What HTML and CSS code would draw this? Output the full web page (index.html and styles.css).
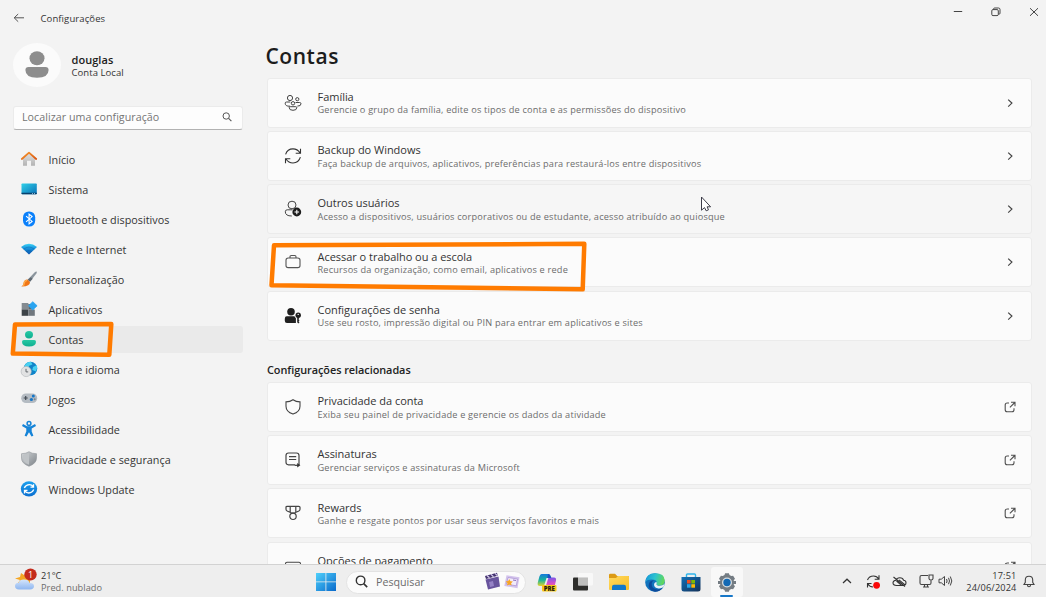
FILE: index.html
```html
<!DOCTYPE html>
<html lang="pt-BR">
<head>
<meta charset="utf-8">
<title>Configurações</title>
<link rel="stylesheet" href="styles.css">
</head>
<body>
<svg class="defs" width="0" height="0" aria-hidden="true">
  <defs>
    <linearGradient id="gTeal" x1="0" y1="0" x2="0" y2="1"><stop offset="0" stop-color="#27c9a4"/><stop offset="1" stop-color="#0fae90"/></linearGradient>
    <linearGradient id="gSys" x1="0" y1="0" x2="1" y2="1"><stop offset="0" stop-color="#2fd0e8"/><stop offset="1" stop-color="#0a71b8"/></linearGradient>
    <linearGradient id="gHouse" x1="0" y1="0" x2="0" y2="1"><stop offset="0" stop-color="#e4e4e4"/><stop offset="1" stop-color="#b3b3b3"/></linearGradient>
    <linearGradient id="gRoof" x1="0" y1="0" x2="1" y2="1"><stop offset="0" stop-color="#f79a30"/><stop offset="1" stop-color="#d9540f"/></linearGradient>
    <linearGradient id="gWifi" x1="0" y1="0" x2="0" y2="1"><stop offset="0" stop-color="#3ad0f5"/><stop offset=".45" stop-color="#1591dc"/><stop offset="1" stop-color="#0a4fa8"/></linearGradient>
    <linearGradient id="gBlue" x1="0" y1="0" x2="0" y2="1"><stop offset="0" stop-color="#1ba0ee"/><stop offset="1" stop-color="#0b6fd0"/></linearGradient>
    <linearGradient id="gShield" x1="0" y1="0" x2="1" y2="1"><stop offset="0" stop-color="#d3d6d9"/><stop offset="1" stop-color="#7d8388"/></linearGradient>
    <linearGradient id="gWin" x1="0" y1="0" x2="1" y2="1"><stop offset="0" stop-color="#4fd0fb"/><stop offset="1" stop-color="#0869cb"/></linearGradient>
    <linearGradient id="gCloud" x1="0" y1="0" x2="0" y2="1"><stop offset="0" stop-color="#d5e5fb"/><stop offset="1" stop-color="#8eb6f0"/></linearGradient>
    <linearGradient id="gFolder" x1="0" y1="0" x2="1" y2="1"><stop offset="0" stop-color="#ffd95e"/><stop offset="1" stop-color="#f9bd25"/></linearGradient>
    <linearGradient id="gEdge" x1="0" y1=".2" x2="1" y2=".4"><stop offset="0" stop-color="#1795d8"/><stop offset=".5" stop-color="#2bc3d0"/><stop offset="1" stop-color="#62d85a"/></linearGradient>
    <linearGradient id="gStore" x1="0" y1="0" x2="1" y2="1"><stop offset="0" stop-color="#1271b8"/><stop offset="1" stop-color="#153158"/></linearGradient>
    <linearGradient id="gCopA" x1="0" y1="0" x2="0" y2="1"><stop offset="0" stop-color="#1478dd"/><stop offset=".5" stop-color="#18b39a"/><stop offset="1" stop-color="#e0d52c"/></linearGradient>
    <linearGradient id="gCopB" x1="0" y1="0" x2="0" y2="1"><stop offset="0" stop-color="#7a57e8"/><stop offset=".5" stop-color="#d94fc4"/><stop offset="1" stop-color="#fb7c58"/></linearGradient>
    <symbol id="chevron" viewBox="0 0 12 12"><path d="M4.2 2.6 7.9 6.1 4.2 9.6" fill="none" stroke="#444" stroke-width="1.2"/></symbol>
    <symbol id="external" viewBox="0 0 12 12"><path d="M5 2H3.200Q1.200 2 1.200 4v4.800q0 2 2 2H8q2 0 2-2V7.300M7 1.300h4v4M10.800 1.500 5.900 6.300" fill="none" stroke="#505050" stroke-width="1.1"/></symbol>
  </defs>
</svg>

<div class="desktop">
  <div class="window">
    <aside class="sidebar">
      <div class="titlebar">
        <svg width="12" height="10" viewBox="0 0 12 10"><path d="M11 4.800H1.200M5.200 1 1.200 4.800l4 3.900" fill="none" stroke="#555" stroke-width="1"/></svg>
        <span class="app-name">Configurações</span>
      </div>
      <div class="profile">
        <div class="avatar">
          <svg width="24" height="28" viewBox="0 0 24 28"><ellipse cx="12" cy="7.300" rx="7.500" ry="7" fill="#8d8d8d"/><path d="M3.600 16h16.800q3.200 0 3.200 3 0 7.700-11.600 7.700T.4 19q0-3 3.200-3z" fill="#8d8d8d"/></svg>
        </div>
        <div class="who"><strong>douglas</strong><span>Conta Local</span></div>
      </div>
      <div class="find"><span>Localizar uma configuração</span>
        <svg width="10" height="10" viewBox="0 0 10 10"><circle cx="4.200" cy="4" r="3.200" fill="none" stroke="#555"/><path d="m6.600 6.300 2.800 2.900" stroke="#555" stroke-width="1.1"/></svg>
      </div>
      <nav class="nav">
        <a class="nav-item"><svg width="18" height="18" viewBox="0 0 18 18"><path d="M3 7.500 9 2.200l6 5.300v8.200h-4v-5H7v5H3z" fill="url(#gHouse)"/><path d="M1.800 9 9 2.600 16.200 9" fill="none" stroke="url(#gRoof)" stroke-width="1.800" stroke-linecap="round" stroke-linejoin="round"/></svg><span>Início</span></a>
        <a class="nav-item"><svg width="18" height="18" viewBox="0 0 18 18"><rect x="1.500" y="3.500" width="15.300" height="10.700" rx=".8" fill="url(#gSys)"/><path d="M1.500 12.700h15.300v.8q0 .8-.8.8H2.300q-.8 0-.8-.8z" fill="#09406b"/><path d="M12 13.500h1m1 0h1" stroke="#bfe9ff" stroke-width=".7"/></svg><span>Sistema</span></a>
        <a class="nav-item"><svg width="18" height="18" viewBox="0 0 18 18"><rect x="3" y="1.400" width="12.200" height="15.200" rx="5.800" fill="#0a80fb"/><path d="m6.100 6.200 6 5.200-3 2.500V4.100l3 2.500-6 5.200" fill="none" stroke="#fff" stroke-width="1.1"/></svg><span>Bluetooth e dispositivos</span></a>
        <a class="nav-item"><svg width="18" height="18" viewBox="0 0 18 18"><path d="M1 7Q9 .7 17 7l-8 7.500z" fill="url(#gWifi)"/><path d="M3.500 9.300Q9 4.800 14.500 9.300M6 11.600q3-2.400 6 0" fill="none" stroke="#073f87" stroke-opacity=".4" stroke-width=".7"/></svg><span>Rede e Internet</span></a>
        <a class="nav-item"><svg width="18" height="18" viewBox="0 0 18 18"><path d="M16.600 1.500q.6.600-.2 2L10 11.700l-2.400-2L15 2q1-.9 1.600-.5z" fill="#8b959d"/><path d="m10.800 7.200 1.900 1.600-2.700 3-2.300-2z" fill="#606a72"/><path d="M7.400 9.600 10 12q.2 4.600-8.700 4.400 2-.9 2.200-3.200.5-3.400 3.900-3.600z" fill="#f07516"/><path d="M7.100 10.300q-2.700.3-3 3.300 0 1.300-.8 2.300" fill="none" stroke="#ffad48" stroke-width="1.300"/></svg><span>Personalização</span></a>
        <a class="nav-item"><svg width="18" height="18" viewBox="0 0 18 18"><rect x="1.700" y="3" width="6.600" height="6.600" fill="#848b91"/><rect x="1.700" y="9.500" width="6.600" height="6.300" fill="#3d4348"/><rect x="8.300" y="9.500" width="6.500" height="6.300" fill="#71787e"/><path d="M8.300 4h5v5.500h-5z" fill="#5f676d"/><path d="m12.800 1.700 4.300 4.100-4.300 4.100-4.300-4.100z" fill="#29a4f0" stroke="#29a4f0" stroke-width=".8" stroke-linejoin="round"/></svg><span>Aplicativos</span></a>
        <a class="nav-item selected"><svg width="18" height="18" viewBox="0 0 18 18"><ellipse cx="9" cy="4.700" rx="4" ry="3.700" fill="url(#gTeal)"/><path d="M3.800 10h10.400q1.800 0 1.800 1.800 0 4.700-7 4.700t-7-4.700Q2 10 3.800 10z" fill="url(#gTeal)"/></svg><span>Contas</span></a>
        <a class="nav-item"><svg width="18" height="18" viewBox="0 0 18 18"><circle cx="10.500" cy="8.500" r="6.800" fill="#0f83c9"/><path d="M4.500 6Q6.300 1.800 11 1.700l1.400 2.800-3.300 1.300-1 3-3.600-.4zM13 7l4-2q.8 3.800-1 6.400L12.300 10z" fill="#47d0f0"/><circle cx="6.200" cy="11.500" r="5.100" fill="#e1e2e3" stroke="#adb2b6" stroke-width=".6"/><path d="M6 8.800v3.100h2.200" fill="none" stroke="#63686d"/></svg><span>Hora e idioma</span></a>
        <a class="nav-item"><svg width="18" height="18" viewBox="0 0 18 18"><rect x="1.200" y="3.400" width="16" height="9.700" rx="4.800" fill="#b4bbc2"/><path d="M3.700 8h4M5.700 6v4" stroke="#444c54" stroke-width="1.2"/><circle cx="13.300" cy="5.900" r="1.500" fill="#1476c8"/><circle cx="11.400" cy="9.500" r="1.600" fill="#1476c8"/><circle cx="14.700" cy="9.300" r="1" fill="#7a858e"/></svg><span>Jogos</span></a>
        <a class="nav-item"><svg width="18" height="18" viewBox="0 0 18 18"><circle cx="9" cy="3.500" r="1.900" fill="none" stroke="#1584d8" stroke-width="1.5"/><path d="m3 4 4.100 2.300h3.800L15 4l1 1.900-4.300 2.500v3l1.700 4.400-1.900.7L9 12.200l-2.500 4.300-1.900-.7 1.700-4.400v-3L2 5.900z" fill="#1584d8"/></svg><span>Acessibilidade</span></a>
        <a class="nav-item"><svg width="18" height="18" viewBox="0 0 18 18"><path d="M9 1.700q2.700 2 7.500 2v4.600q0 5-7.500 8-7.500-3-7.500-8V3.700q4.800 0 7.500-2z" fill="url(#gShield)" stroke="#8f9499" stroke-width=".6"/><path d="M9 3q-2.200 1.700-6 1.900v3.500q0 3.800 6 6.300z" fill="#bfc3c6"/></svg><span>Privacidade e segurança</span></a>
        <a class="nav-item"><svg width="18" height="18" viewBox="0 0 18 18"><ellipse cx="9" cy="8.800" rx="8.200" ry="7.600" fill="url(#gBlue)"/><path d="M4.300 8Q6 4.600 9.300 4.600q2.500 0 3.900 2M13.500 4.200v2.900h-3M13.700 9.600Q12.200 13 8.800 13q-2.600 0-4-2M4.500 13.400v-2.900h3" fill="none" stroke="#fff" stroke-width="1.3"/></svg><span>Windows Update</span></a>
      </nav>
    </aside>

    <main class="content">
      <div class="caption">
        <svg width="10" height="10" viewBox="0 0 10 10"><path d="M.8 4.500h8.400" stroke="#444" stroke-width="1"/></svg>
        <svg width="10" height="10" viewBox="0 0 10 10"><path d="M2.600 2.500V2q0-1 1-1H7.500Q9 1 9 2.500v3.700q0 1-1 1h-.6" fill="none" stroke="#444"/><rect x=".8" y="2.600" width="6.500" height="6" rx="1.200" fill="none" stroke="#444"/></svg>
        <svg width="10" height="10" viewBox="0 0 10 10"><path d="m1 1.200 8 7.600M9 1.200 1 8.800" stroke="#444" stroke-width="1"/></svg>
      </div>
      <h1>Contas</h1>
      <div class="scroll">
        <section class="cards">
          <div class="card">
            <svg class="ico" width="18" height="18" viewBox="0 0 18 18"><g fill="none" stroke="#444"><circle cx="6" cy="4" r="2.600"/><circle cx="13.300" cy="5.200" r="1.600"/><circle cx="9" cy="9.300" r="1.700"/><path d="M6 12.200q-4.800.3-4.800-3Q1.200 8 2.500 8h3.800M11.500 8.500h4q1.500 0 1.500 1.300 0 2.400-3.600 2.300M6.200 12.700h5.600q1 0 1 1 0 2.600-3.800 2.600t-3.800-2.600q0-1 1-1z"/></g></svg>
            <div class="text"><b>Família</b><span>Gerencie o grupo da família, edite os tipos de conta e as permissões do dispositivo</span></div>
            <svg class="end" width="12" height="12"><use href="#chevron"/></svg>
          </div>
          <div class="card">
            <svg class="ico" width="18" height="18" viewBox="0 0 18 18"><path d="M1.600 7.300Q3.400 1.900 9 1.900q4.500 0 7 4M16.500 1.800v4.500h-4.800M16.400 10.200Q14.600 16 9 16q-4.500 0-7-4M1.500 16.300v-4.600h4.800" fill="none" stroke="#333" stroke-width="1.1"/></svg>
            <div class="text"><b>Backup do Windows</b><span>Faça backup de arquivos, aplicativos, preferências para restaurá-los entre dispositivos</span></div>
            <svg class="end" width="12" height="12"><use href="#chevron"/></svg>
          </div>
          <div class="card hover">
            <svg class="ico" width="18" height="18" viewBox="0 0 18 18"><ellipse cx="8" cy="5" rx="4" ry="3.800" fill="none" stroke="#444"/><path d="M8.500 9.800H3.200q-1.900 0-1.900 2 0 4.200 6.500 4.200" fill="none" stroke="#444"/><circle cx="12.800" cy="12" r="4.400" fill="#1c1c1c"/><path d="M12.800 9.700v4.600M10.500 12h4.600" stroke="#fff" stroke-width="1.1"/></svg>
            <div class="text"><b>Outros usuários</b><span>Acesso a dispositivos, usuários corporativos ou de estudante, acesso atribuído ao quiosque</span></div>
            <svg class="end" width="12" height="12"><use href="#chevron"/></svg>
          </div>
          <div class="card">
            <svg class="ico" width="18" height="18" viewBox="0 0 18 18"><path d="M6 5V3.700q0-1.200 1.200-1.200h3.600q1.200 0 1.200 1.200V5" fill="none" stroke="#555" stroke-width="1.1"/><rect x="2" y="5" width="14" height="9.600" rx="2.200" fill="none" stroke="#555" stroke-width="1.1"/></svg>
            <div class="text"><b>Acessar o trabalho ou a escola</b><span>Recursos da organização, como email, aplicativos e rede</span></div>
            <svg class="end" width="12" height="12"><use href="#chevron"/></svg>
          </div>
          <div class="card">
            <svg class="ico" width="18" height="18" viewBox="0 0 18 18"><circle cx="7" cy="4.800" r="3.800" fill="#202020"/><path d="M2.800 9.300h7.600l1.500 2V16H3q-2.200 0-2.200-2.300v-2q0-2.400 2-2.400z" fill="#202020"/><circle cx="14.200" cy="8.300" r="2.700" fill="#202020"/><path d="M13.200 10v5.300l1.100 1.100 1.200-1.200-1-1 1-1-1-1 .8-1.600" fill="#202020"/><circle cx="14.200" cy="7.400" r=".7" fill="#fff"/></svg>
            <div class="text"><b>Configurações de senha</b><span>Use seu rosto, impressão digital ou PIN para entrar em aplicativos e sites</span></div>
            <svg class="end" width="12" height="12"><use href="#chevron"/></svg>
          </div>
        </section>
        <h2>Configurações relacionadas</h2>
        <section class="cards">
          <div class="card">
            <svg class="ico" width="18" height="18" viewBox="0 0 18 18"><path d="M9 1.700q3 2.200 7 2.200v4.300q0 5.500-7 7.900-7-2.400-7-7.900V3.900q4 0 7-2.200z" fill="none" stroke="#444" stroke-width="1.1"/></svg>
            <div class="text"><b>Privacidade da conta</b><span>Exiba seu painel de privacidade e gerencie os dados da atividade</span></div>
            <svg class="end" width="12" height="12"><use href="#external"/></svg>
          </div>
          <div class="card">
            <svg class="ico" width="18" height="18" viewBox="0 0 18 18"><path d="M11 13.800H4.500Q2 13.800 2 11.300V4.500Q2 2 4.500 2h8Q15 2 15 4.500v9.500M5 5.700h7.200M5 8.500h7.200" fill="none" stroke="#444" stroke-width="1.2"/><path d="m13.200 12.100 3.200 2.200-3.200 2.200z" fill="#333"/><path d="M10.800 14.300h3.500" stroke="#333" stroke-width="1.2"/></svg>
            <div class="text"><b>Assinaturas</b><span>Gerenciar serviços e assinaturas da Microsoft</span></div>
            <svg class="end" width="12" height="12"><use href="#external"/></svg>
          </div>
          <div class="card">
            <svg class="ico" width="18" height="18" viewBox="0 0 18 18"><g fill="none" stroke="#444" stroke-width="1.2"><path d="M3.200 2.300h11.600q1.200 0 1.200 1v1.900q0 1.200-1.200 1.800L10.500 9h-3L3.200 7Q2 6.400 2 5.200V3.300q0-1 1.200-1zM6.200 2.300v6M11.800 2.300v6"/><circle cx="9" cy="12.300" r="3.200"/></g></svg>
            <div class="text"><b>Rewards</b><span>Ganhe e resgate pontos por usar seus serviços favoritos e mais</span></div>
            <svg class="end" width="12" height="12"><use href="#external"/></svg>
          </div>
          <div class="card">
            <svg class="ico" width="18" height="18" viewBox="0 0 18 18"><rect x="1.500" y="4.200" width="15" height="10.500" rx="1.500" fill="none" stroke="#444" stroke-width="1.1"/><path d="M1.500 8h15" stroke="#444"/></svg>
            <div class="text single"><b>Opções de pagamento</b></div>
            <svg class="end" width="12" height="12"><use href="#external"/></svg>
          </div>
        </section>
      </div>
    </main>
  </div>

  <footer class="taskbar">
    <div class="weather">
      <svg width="23" height="24" viewBox="0 0 23 24"><path d="m7 5 3 2h6v8H4l2-3-5-1.500L6 9z" fill="#f5a623"/><path d="M5 21.500q-4-.3-4-3.500 0-3 3.500-3.300Q5.500 11.500 10 11.500q4.700 0 5.700 3.400 4.300 0 4.300 3.300 0 3.100-4 3.300z" fill="url(#gCloud)"/><ellipse cx="16.500" cy="6.500" rx="6.200" ry="6" fill="#c42b1c"/><text x="16.700" y="10" class="badge-no">1</text></svg>
      <div class="wtext"><span>21°C</span><span class="dim">Pred. nublado</span></div>
    </div>
    <div class="apps">
      <svg class="start" width="20" height="18" viewBox="0 0 20 18"><path d="M0 0h9.500v8.500H0zM10.300 0H20v8.500h-9.700zM0 9.300h9.500V18H0zM10.300 9.300H20V18h-9.700z" fill="url(#gWin)"/></svg>
      <div class="search">
        <svg width="13" height="13" viewBox="0 0 13 13"><circle cx="5.600" cy="5.400" r="4.300" fill="none" stroke="#333" stroke-width="1.4"/><path d="m8.700 8.600 3.500 3.500" stroke="#333" stroke-width="1.6"/></svg>
        <span>Pesquisar</span>
        <svg width="36" height="19" viewBox="0 0 36 19"><path d="m1.500 7.500 13-3 1.500 10-12 3z" fill="#68549d"/><path d="m1 4 12-3.200.8 3L2 7z" fill="#44336f"/><path d="m3 3.500 2.500 2.300M7 2.400l2.500 2.300M11 1.400l2.400 2.200" stroke="#d8cdf0" stroke-width="1.2"/><path d="m5 10 4-1 1 5-4 1z" fill="#9582c6"/><path d="m22.500 3.200 13 2-2 11-13.200-2.200z" fill="#d3c3ec"/><path d="m24 5.500 9.500 1.500-1.200 6.800-9.700-1.600z" fill="#f1eafa" stroke="#a78fd0" stroke-width=".7"/><path d="m25.200 7 1.200 2.200 2.500.3-1.800 1.700.5 2.400-2.300-1.200-2.200 1.200.4-2.500-1.800-1.600 2.500-.4z" fill="#f8a623"/><path d="m29 8 3 .5" stroke="#8c6db9"/></svg>
      </div>
      <div class="app"><svg width="20" height="20" viewBox="0 0 20 20"><path d="M4.500 2H11q2 0 2.500 2l.5 2H9.500L7 14H3Q0 14 .8 10.500l1.600-6Q3 2 4.500 2z" fill="url(#gCopA)"/><path d="M11.500 5.500H17q2.500 0 2 3l-1.500 6q-.5 3-3.500 3H8.300q-2 0-2.500-2l-.5-2H9z" fill="url(#gCopB)"/><path d="M11 2q2 0 2.600 2l.7 2h-4z" fill="#1b50c2"/><rect x="5" y="13" width="14.500" height="6.500" rx="1" fill="#f8c81c"/><text x="12.300" y="18.500" class="pre">PRE</text></svg></div>
      <div class="app"><svg width="20" height="18" viewBox="0 0 20 18"><rect x="0" y="4.500" width="15" height="13" rx="1" fill="#2d2d2b"/><rect x="5" y="0" width="15" height="12.500" rx="1" fill="#f8f8f8" fill-opacity=".95"/><path d="M5 4.500h10v8H5z" fill="#aaa9a8" fill-opacity=".7"/></svg></div>
      <div class="app"><svg width="20" height="18" viewBox="0 0 20 18"><path d="M0 2q0-1.300 1.300-1.300H6L8.200 3H19q1 0 1 1v4H0z" fill="#dc9a14"/><path d="M0 5h7l2-2h10q1 0 1 1v12q0 1-1 1H1q-1 0-1-1z" fill="url(#gFolder)"/><path d="M3 17v-3.200q0-2 2-2h10q2 0 2 2V17z" fill="#1278c9"/></svg></div>
      <div class="app"><svg width="20" height="19" viewBox="0 0 20 19"><ellipse cx="10" cy="9.500" rx="9.800" ry="9.200" fill="#1273bd"/><path d="M.3 9Q1 .3 10 .3q9.700 0 9.700 7.200 0 5-5 5-3.200 0-3.200-1.300 1-3.600-2.500-4.400Q3 5.800.3 9z" fill="url(#gEdge)"/><path d="M9 7q-3 2.200-2.200 5.600.9 3.700 5.600 3.900 3 0 5.600-2-3 4.200-8 4.200-5.500-.7-6.300-5.700Q3.400 7.700 9 7z" fill="#0c4b9b"/><path d="M11.500 11q-.3 1.800 3.200 1.800 2.800 0 4.800-1.800l-.9 3q-3 1.900-6 1.200-4-.8-3.500-4.200.4-1.500 2-2 1.300.5.400 2z" fill="#e7f2f6"/></svg></div>
      <div class="app"><svg width="20" height="19" viewBox="0 0 20 19"><path d="M5.500 5V2q0-1 1-1h7q1 0 1 1v3" fill="none" stroke="#2fb4ea" stroke-width="1.4"/><path d="M.5 4h19v12q0 2.500-2.500 2.500H3Q.5 18.500.5 16z" fill="url(#gStore)"/><path d="M6 7h3.600v3.500H6z" fill="#f25022"/><path d="M10.300 7H14v3.500h-3.700z" fill="#7fba00"/><path d="M6 11.200h3.600v3.500H6z" fill="#28a8ea"/><path d="M10.300 11.200H14v3.500h-3.700z" fill="#ffb900"/></svg></div>
      <div class="app active"><svg width="20" height="19" viewBox="0 0 20 19"><path d="m7.500 2 .6-1.700h3.800l.6 1.700 1.800 1 1.800-.3 1.900 3.100-1.200 1.500v4.400l1.200 1.500-1.900 3.100-1.800-.3-1.800 1-.6 1.700H8.100L7.500 17l-1.800-1-1.800.3L2 13.200l1.200-1.500V7.300L2 5.800l1.900-3.100 1.800.3z" fill="#747c83"/><path d="M1 8h18v3H1z" fill="#747c83"/><circle cx="10" cy="9.500" r="5" fill="#d8dde0"/><circle cx="10" cy="9.500" r="3.700" fill="#1369b4"/></svg><i></i></div>
    </div>
    <div class="tray">
      <svg class="t-up" width="10" height="6" viewBox="0 0 10 6"><path d="m1 5 4-3.800L9 5" fill="none" stroke="#333" stroke-width="1.2"/></svg>
      <svg class="t-sync" width="15" height="15" viewBox="0 0 15 15"><path d="M1.500 6Q3 2 7.500 2q3.500 0 5 2.800M13 1.200v4H8.700M1.500 13.500v-4h4M2 10q1.300 2.700 5 3" fill="none" stroke="#333" stroke-width="1.1"/><circle cx="10.600" cy="11.300" r="3.400" fill="#fa0808"/></svg>
      <svg class="t-cloud" width="15" height="13" viewBox="0 0 15 13"><path d="M4.500 10.500Q1 10.500 1 7.800q0-2.300 3-2.600.8-2.400 3.800-2.400 3.200 0 3.800 2.500Q14 5.500 14 7.800q0 2.700-3.500 2.700zM1.500 2l11.500 9.500M4.500 6l5 4.300M7 4.800l5.500 4.600" fill="none" stroke="#333" stroke-width="1.1"/></svg>
      <svg class="t-net" width="15" height="14" viewBox="0 0 15 14"><path d="M9 1.500H2.500Q1 1.500 1 3v6q0 1.500 1.500 1.500h8Q12 10.500 12 9V8M4 13h6M5.500 10.500V13M8.500 10.500V13M10 1h4v3.500q0 1.500-2 1.500t-2-1.500zM12 6v2" fill="none" stroke="#444" stroke-width="1.1"/></svg>
      <svg class="t-vol" width="15" height="12" viewBox="0 0 15 12"><path d="M1 4.200h2.300L6.500 1.500v9L3.300 7.800H1zM8.500 4q1.200 2 0 4M10.500 2.800q2 3.200 0 6.400M12.300 1.500q3 4.500 0 9" fill="none" stroke="#444"/></svg>
      <div class="clock"><span>17:51</span><span>24/06/2024</span></div>
      <svg width="12" height="13" viewBox="0 0 12 13"><path d="M1 9.500h10L9.700 7.300V5Q9.700 1.300 6 1.300T2.300 5v2.300zM4.500 10q0 1.800 1.500 1.800T7.500 10" fill="none" stroke="#444" stroke-width="1.1"/></svg>
    </div>
  </footer>

  <svg class="overlay" width="1046" height="597" viewBox="0 0 1046 597">
    <path d="M15 324.400 111.300 324 109.300 354.800 12.800 353.600ZM274 245.300 584.300 243.800 582.700 289.300 271.500 285.200Z" fill="none" stroke="#ff7b00" stroke-width="4.500" stroke-linejoin="round"/>
    <path d="M701.500 197v13.200l3-2.600 1.700 3.200 2.300-1-1.400-3h3.500z" fill="#fff" stroke="#3c3c48" stroke-width="1" stroke-linejoin="round"/>
  </svg>
</div>
</body>
</html>
```
FILE: styles.css
```css
* { box-sizing: border-box; }
body { margin: 0; font-family: "Open Sans", "Noto Sans", sans-serif; color: #333; }
svg { display: block; flex: none; }
.defs { position: absolute; }
.desktop { position: relative; width: 1046px; height: 597px; overflow: hidden; display: grid; grid-template-rows: 564px 33px; background: #f3f3f3; }
.window { display: grid; grid-template-columns: 267px 1fr; min-height: 0; white-space: nowrap; }

.sidebar { padding: 0 0 0 12px; }
.titlebar { display: flex; align-items: center; height: 36px; padding-left: 1px; gap: 15.500px; }
.app-name { font-size: 9.500px; letter-spacing: .1px; }
.profile { display: flex; align-items: center; gap: 10.500px; height: 58px; padding-left: 1px; }
.avatar { width: 48px; height: 44px; border-radius: 50%; background: #fbfbfb; display: grid; place-items: center; }
.who { display: flex; flex-direction: column; line-height: 13px; padding-top: 2px; font-size: 9.500px; letter-spacing: .06px; }
.who strong { font-size: 11px; font-weight: 600; color: #1c1c1c; letter-spacing: .05px; }
.find { display: flex; align-items: center; justify-content: space-between; width: 230px; height: 24px; margin: 11.500px 0 0 1px; padding: 0 10px 1px 8px; border: 1px solid #ebebeb; border-bottom: 1px solid #b2b2b2; border-radius: 3px; background: #fdfdfd; font-size: 10.700px; color: #757575; letter-spacing: .04px; }
.nav { display: flex; flex-direction: column; gap: 3px; margin-top: 16px; }
.nav-item { display: flex; align-items: center; gap: 10.500px; width: 231px; height: 27px; padding-left: 8px; border-radius: 3px; font-size: 10.800px; letter-spacing: .02px; }
.nav-item.selected { background: #eaeaea; }

.content { display: flex; flex-direction: column; min-height: 0; min-width: 0; }
.caption { display: flex; justify-content: flex-end; gap: 28px; height: 24px; padding: 7px 7.500px 0 0; }
h1 { margin: 0 0 0 -1.500px; height: 53.500px; font-size: 21px; line-height: 64px; font-weight: 600; color: #1c1c1c; letter-spacing: .55px; }
.scroll { flex: 1; min-height: 0; overflow: hidden; }
.cards { display: flex; flex-direction: column; gap: 3.300px; width: 765px; }
.card { display: flex; align-items: center; height: 50px; flex: none; padding: 0 15.500px 0 16px; border: 1px solid #ebebeb; border-radius: 3px; background: #fbfbfb; }
.card.hover { background: #f6f6f6; }
.text { flex: 1; margin-left: 15.500px; padding-top: 1px; display: flex; flex-direction: column; line-height: 13px; font-size: 9.200px; letter-spacing: .19px; color: #6c6c6c; }
.text b { font-size: 11px; line-height: 13.500px; font-weight: 400; color: #333; letter-spacing: -.03px; }
.text.single { padding-bottom: 13px; }
h2 { margin: 0; height: 41.200px; padding-top: 20px; font-size: 10.900px; line-height: 18px; font-weight: 600; color: #222; letter-spacing: -.05px; }

.taskbar { display: grid; grid-template-columns: 316px 1fr auto; align-items: center; background: #eeeeee; border-top: 1px solid #d2d2d2; white-space: nowrap; }
.weather { display: flex; align-items: center; gap: 4px; padding-left: 14px; }
.weather svg { margin-top: -2px; }
.wtext { display: flex; flex-direction: column; font-size: 9.200px; line-height: 12px; padding-top: 1px; letter-spacing: .06px; }
.dim { color: #6c6c6c; }
.badge-no { font: 9px "Open Sans", sans-serif; fill: #fff; text-anchor: middle; }
.pre { font: 800 6px "Open Sans", sans-serif; fill: #27200a; text-anchor: middle; }
.apps { display: flex; align-items: center; height: 32px; padding-top: 2px; }
.search { display: flex; align-items: center; width: 180px; height: 23px; margin: 0 5px 0 10px; padding: 0 5px 1px 8px; border: 1px solid #e3e3e3; border-radius: 12px; background: #fbfbfb; font-size: 10.700px; color: #6c6c6c; }
.search span { flex: 1; margin-left: 8px; }
.app { position: relative; display: grid; place-items: center; width: 32px; height: 30px; margin-right: 4px; border-radius: 3px; }
.app.active { background: #f8f8f8; }
.app i { position: absolute; bottom: 0; left: 9px; width: 13px; height: 2.500px; border-radius: 2px; background: #1777c8; }
.tray { display: flex; align-items: center; padding-right: 11px; }
.t-up { margin-right: 14px; }
.t-sync { margin-right: 11px; }
.t-cloud { margin-right: 12px; }
.t-net { margin-right: 4px; }
.t-vol { margin-right: 13px; }
.clock { display: flex; flex-direction: column; align-items: flex-end; font-size: 9.200px; line-height: 12px; margin-right: 6.500px; padding-top: 1px; letter-spacing: .15px; }
.overlay { position: absolute; left: 0; top: 0; pointer-events: none; }
```
